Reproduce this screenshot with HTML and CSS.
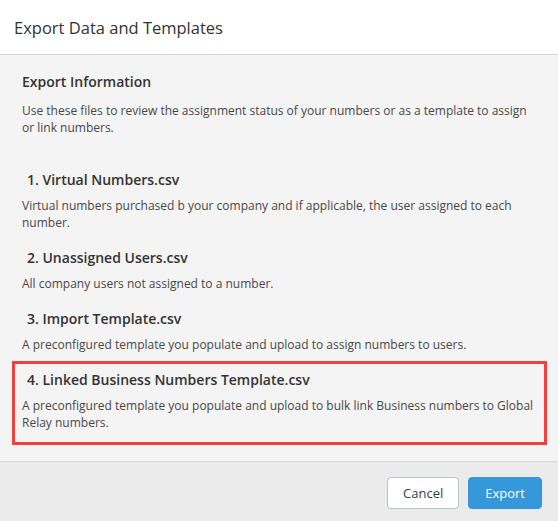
FILE: index.html
```html
<!DOCTYPE html>
<html lang="en">
<head>
    <meta charset="UTF-8">
    <meta name="viewport" content="width=device-width, initial-scale=1.0">
    <title>Export Data and Templates</title>
    <link rel="stylesheet" href="styles.css">
</head>
<body>

    <div class="modal">
        <div class="modal-header">
            <h1 class="modal-title">Export Data and Templates</h1>
        </div>

        <div class="modal-body">
            <div class="intro">
                <h2 class="intro-title">Export Information</h2>
                <p class="intro-text">Use these files to review the assignment status of your numbers or as a template to assign or link numbers.</p>
            </div>

            <div class="file-item">
                <h3 class="file-name">1. Virtual Numbers.csv</h3>
                <p class="file-desc">Virtual numbers purchased b your company and if applicable, the user assigned to each number.</p>
            </div>

            <div class="file-item">
                <h3 class="file-name">2. Unassigned Users.csv</h3>
                <p class="file-desc">All company users not assigned to a number.</p>
            </div>

            <div class="file-item">
                <h3 class="file-name">3. Import Template.csv</h3>
                <p class="file-desc">A preconfigured template you populate and upload to assign numbers to users.</p>
            </div>

            <!-- highlighted item -->
            <div class="file-item highlight">
                <h3 class="file-name">4. Linked Business Numbers Template.csv</h3>
                <p class="file-desc">A preconfigured template you populate and upload to bulk link Business numbers to Global Relay numbers.</p>
            </div>
        </div>

        <div class="modal-footer">
            <button type="button" class="btn btn-cancel">Cancel</button>
            <button type="button" class="btn btn-export">Export</button>
        </div>
    </div>

</body>
</html>
```

FILE: styles.css
```css
body {
    margin: 0;
    font-family: "Open Sans", Arial, sans-serif;
    background-color: #ebebeb;
    color: #333;
}

.modal {
    width: 558px;
}

.modal-header {
    height: 54px;
    background-color: #fff;
    border-bottom: 1px solid #d4d4d4;
    display: flex;
    align-items: center;
    padding-left: 14px;
}

.modal-title {
    margin: 0;
    font-size: 16.5px;
    font-weight: 400;
    color: #333;
}

.modal-body {
    background-color: #f4f4f4;
    padding: 16px 11px 16px 12px;
}

.intro {
    padding: 0 10px;
    margin-bottom: 25px;
}

.intro-title {
    margin: 0 0 9px;
    font-size: 14px;
    line-height: 22px;
    font-weight: 600;
    color: #333;
}

.intro-text {
    margin: 0;
    font-size: 12px;
    line-height: 17px;
    color: #484848;
}

.file-item {
    border: 3px solid transparent;
    padding: 6px 7px 5px;
}

.file-item.highlight {
    border-color: #f2403f;
    padding-bottom: 11px;
}

.file-name {
    margin: 0 0 7px;
    padding-left: 5px;
    font-size: 14px;
    line-height: 20px;
    font-weight: 600;
    color: #333;
}

.file-desc {
    margin: 0;
    font-size: 12px;
    line-height: 17px;
    color: #484848;
}

.modal-footer {
    border-top: 1px solid #d4d4d4;
    display: flex;
    justify-content: flex-end;
    gap: 9px;
    padding: 15px 16px 12px;
}

.btn {
    height: 32px;
    padding: 0 15px;
    font-family: "Open Sans", Arial, sans-serif;
    font-size: 13px;
    border-radius: 4px;
    cursor: pointer;
}

.btn-cancel {
    background-color: #fff;
    border: 1px solid #b9c1c9;
    color: #34404c;
}

.btn-export {
    background-color: #3498db;
    border: 1px solid #3498db;
    color: #fff;
    padding: 0 16px;
}
```
